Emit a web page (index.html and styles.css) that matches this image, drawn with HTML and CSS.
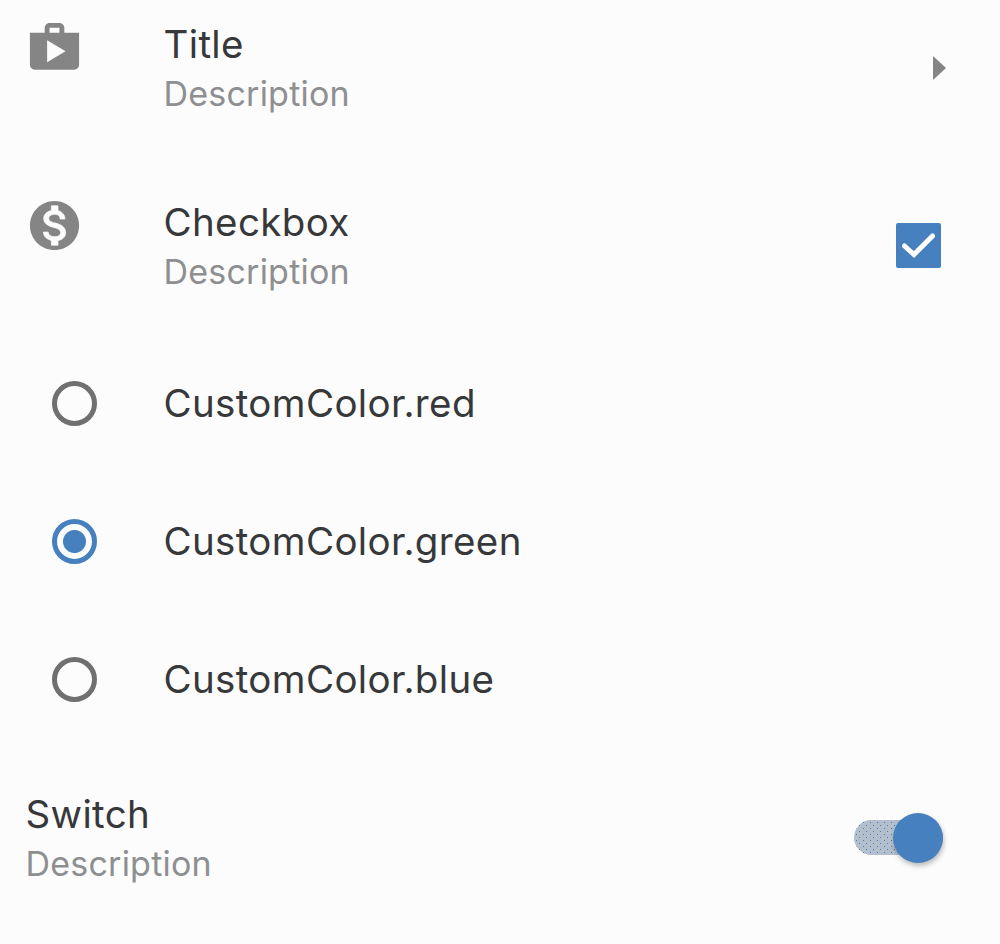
FILE: index.html
```html
<!DOCTYPE html>
<html lang="en">
<head>
<meta charset="utf-8">
<title>Settings</title>
<link rel="stylesheet" href="styles.css">
</head>
<body>
<main class="list">
  <div class="row row-title">
    <div class="lead"><svg class="icon" viewBox="0 0 24 24"><path d="M16 6V4c0-1.110-.890-2-2-2h-4c-1.110 0-2 .890-2 2v2H2v13c0 1.110.890 2 2 2h16c1.110 0 2-.890 2-2V6h-6zm-6-2h4v2h-4V4zM9 18V9l7.500 4.500L9 18z"/></svg></div>
    <div class="text"><div class="title">Title</div><div class="desc">Description</div></div>
    <svg class="arrow" viewBox="0 0 13 24"><path d="M0 0L13 12L0 24Z"/></svg>
  </div>
  <div class="row row-check">
    <div class="lead"><svg class="icon" viewBox="0 0 24 24"><path stroke="#858585" stroke-width="0" d="M12 2C6.480 2 2 6.480 2 12s4.480 10 10 10 10-4.480 10-10S17.520 2 12 2z"/><path class="dollar" d="M13.410 18.090V20h-2.670v-1.930c-1.710-.360-3.160-1.460-3.270-3.400h1.960c.100 1.050.820 1.870 2.650 1.870 1.960 0 2.400-.980 2.400-1.590 0-.830-.440-1.610-2.670-2.140-2.480-.600-4.180-1.620-4.180-3.670 0-1.720 1.390-2.840 3.110-3.210V4h2.670v1.950c1.860.450 2.790 1.860 2.850 3.390H14.300c-.050-1.110-.640-1.870-2.220-1.870-1.500 0-2.400.680-2.400 1.640 0 .840.650 1.390 2.670 1.910s4.180 1.390 4.180 3.910c-.010 1.830-1.380 2.830-3.120 3.160z"/></svg></div>
    <div class="text"><div class="title">Checkbox</div><div class="desc">Description</div></div>
    <svg class="check" viewBox="0 0 45 45"><rect width="45" height="45" rx="2"/><path d="M8.500 23L18 31.500L36.500 13"/></svg>
  </div>
  <div class="row row-radio"><span class="radio"></span><div class="title">CustomColor.red</div></div>
  <div class="row row-radio"><span class="radio on"></span><div class="title">CustomColor.green</div></div>
  <div class="row row-radio"><span class="radio"></span><div class="title">CustomColor.blue</div></div>
  <div class="row row-switch">
    <div class="text"><div class="title">Switch</div><div class="desc">Description</div></div>
    <span class="switch"><span class="thumb"></span></span>
  </div>
</main>
</body>
</html>
```
FILE: styles.css
```css
* { box-sizing: border-box; }
body { margin: 0; background: #fcfcfc; font-family: Inter, "Liberation Sans", sans-serif; }
.list { height: 944px; overflow: hidden; }
.row { display: flex; }
.row-title { height: 178px; padding: 18px 54px 0 24.5px; }
.row-check { height: 156px; padding: 18px 59px 0 24.5px; }
.lead { width: 139px; }
.icon { display: block; width: 59px; height: 59px; fill: #858585; }
.dollar { fill: #fcfcfc; stroke: #fcfcfc; stroke-width: 0.3; }
.text { flex: 1; }
.title { height: 52px; line-height: 53px; font-size: 38.5px; color: #37383a; letter-spacing: 0.36px; white-space: nowrap; }
.desc { height: 48px; line-height: 48px; font-size: 34px; color: #8e8f91; letter-spacing: 0.22px; white-space: nowrap; }
.arrow { width: 13px; height: 24px; margin-top: 38px; fill: #858585; }
.check { width: 45px; height: 45px; margin-top: 27px; fill: #4680bf; }
.check path { fill: none; stroke: #fff; stroke-width: 5; stroke-linecap: round; }
.row-radio { height: 138px; align-items: center; padding-left: 52px; }
.radio { width: 45px; height: 45px; margin-right: 66.5px; border: 5px solid #707070; border-radius: 50%; }
.radio.on { border-color: #4680bf; background: radial-gradient(circle, #4680bf 11px, transparent 12px); }
.row-switch { padding: 40px 57px 0 25.5px; }
/* Track with a fine dotted fill */
.switch {
  width: 89px; height: 35px; margin-top: 32px; border-radius: 18px;
  display: flex; align-items: center; justify-content: flex-end;
  background-color: #b3bfcc;
  background-image:
    conic-gradient(from 270deg at 1px 1px, #4680bf 90deg, transparent 0),
    conic-gradient(from 270deg at 1px 1px, #4680bf 90deg, transparent 0);
  background-size: 7px 6px;
  background-position: 2px 2px, 5px 5px;
}
.thumb { flex: none; width: 50px; height: 50px; border-radius: 50%; background: #4680bf; box-shadow: 1px 3px 5px rgba(0,0,0,.25); }
```
